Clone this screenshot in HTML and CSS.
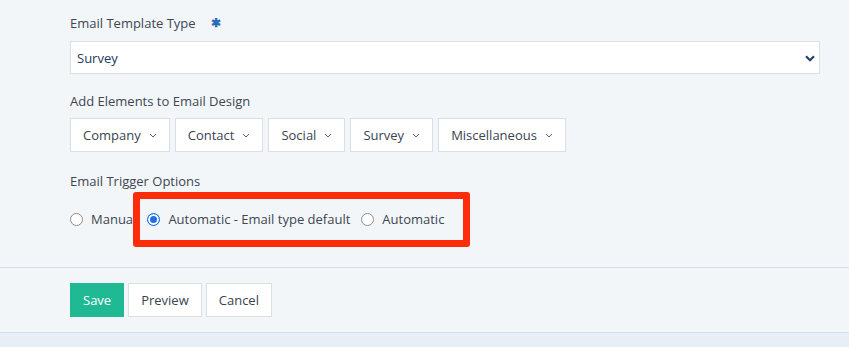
FILE: index.html
```html
<!DOCTYPE html>
<html>
<head>
<meta charset="utf-8">
<link rel="stylesheet" href="styles.css">
</head>
<body>
<div class="main">
  <div class="label label-first">Email Template Type <span class="req">&#10033;</span></div>
  <div class="select">
    <span>Survey</span>
    <svg class="sel-chev" width="10" height="7" viewBox="0 0 10 7"><path d="M1 1.2 L5 5.2 L9 1.2" fill="none" stroke="#2b4468" stroke-width="2.2"/></svg>
  </div>

  <div class="label label-gap">Add Elements to Email Design</div>
  <div class="btn-row">
    <button class="dd">Company <svg width="8" height="5" viewBox="0 0 8 5"><path d="M1 1 L4 4 L7 1" fill="none" stroke="#5a6470" stroke-width="1"/></svg></button>
    <button class="dd">Contact <svg width="8" height="5" viewBox="0 0 8 5"><path d="M1 1 L4 4 L7 1" fill="none" stroke="#5a6470" stroke-width="1"/></svg></button>
    <button class="dd">Social <svg width="8" height="5" viewBox="0 0 8 5"><path d="M1 1 L4 4 L7 1" fill="none" stroke="#5a6470" stroke-width="1"/></svg></button>
    <button class="dd">Survey <svg width="8" height="5" viewBox="0 0 8 5"><path d="M1 1 L4 4 L7 1" fill="none" stroke="#5a6470" stroke-width="1"/></svg></button>
    <button class="dd">Miscellaneous <svg width="8" height="5" viewBox="0 0 8 5"><path d="M1 1 L4 4 L7 1" fill="none" stroke="#5a6470" stroke-width="1"/></svg></button>
  </div>

  <div class="label label-gap2">Email Trigger Options</div>
  <div class="radio-row">
    <label class="opt"><span class="radio"></span>Manual</label>
    <label class="opt"><span class="radio checked"></span>Automatic - Email type default</label>
    <label class="opt"><span class="radio"></span>Automatic</label>
    <div class="highlight"></div>
  </div>
</div>
<div class="footer">
  <button class="btn save">Save</button>
  <button class="btn">Preview</button>
  <button class="btn">Cancel</button>
</div>
<div class="bottom"></div>
</body>
</html>
```

FILE: styles.css
```css
* { box-sizing: border-box; }
html, body { margin: 0; padding: 0; }
body {
  background: #f3f6f9;
  font-family: "Open Sans", "Noto Sans", sans-serif;
  font-size: 13px;
  color: #3d4651;
  width: 849px;
  height: 347px;
  overflow: hidden;
}
.main {
  padding: 14px 29px 39px 70px;
  border-bottom: 1px solid #d9dfe4;
}
.label { line-height: 18px; height: 18px; }
.req { color: #2b6cb8; font-size: 12px; margin-left: 12px; vertical-align: 1px; font-weight: 700; }
.select {
  margin-top: 9px;
  height: 33px;
  background: #fff;
  border: 1px solid #d9dfe4;
  display: flex;
  align-items: center;
  justify-content: space-between;
  padding: 0 4px 0 6px;
  color: #22395a;
}
.sel-chev { margin-top: 1px; }
.label-gap { margin-top: 18px; }
.btn-row { margin-top: 8px; display: flex; gap: 5px; }
button {
  font-family: inherit;
  font-size: 13px;
  color: #3a4350;
  background: #fff;
  border: 1px solid #d9dfe4;
  border-radius: 0;
  height: 34px;
  margin: 0;
  cursor: pointer;
}
.dd {
  display: inline-flex;
  align-items: center;
  gap: 8px;
  padding: 0 12px 0 12px;
}
.dd svg { margin-top: 1px; }
.label-gap2 { margin-top: 20px; }
.radio-row {
  position: relative;
  margin-top: 20px;
  height: 18px;
  display: flex;
  align-items: center;
}
.opt {
  display: inline-flex;
  align-items: center;
  margin-right: 11px;
  line-height: 18px;
}
.radio {
  width: 13px;
  height: 13px;
  border-radius: 50%;
  border: 1px solid #8d8d8d;
  background: #fff;
  margin-right: 8px;
  flex: none;
}
.radio.checked {
  border-color: #1f6fe6;
  background: #1f6fe6;
  box-shadow: inset 0 0 0 2px #fff;
}
.highlight {
  position: absolute;
  left: 63px;
  top: -18px;
  width: 337px;
  height: 55px;
  border: 7px solid #fd2c0b;
  border-radius: 3px;
  pointer-events: none;
}
.footer {
  padding: 15px 0 15px 70px;
  border-bottom: 1px solid #d9dfe4;
  display: flex;
  gap: 4px;
}
.btn { padding: 0 12px; }
.save {
  background: #1fb994;
  border-color: #1fb994;
  color: #fff;
}
.bottom { background: #e8eef5; height: 20px; }
```
